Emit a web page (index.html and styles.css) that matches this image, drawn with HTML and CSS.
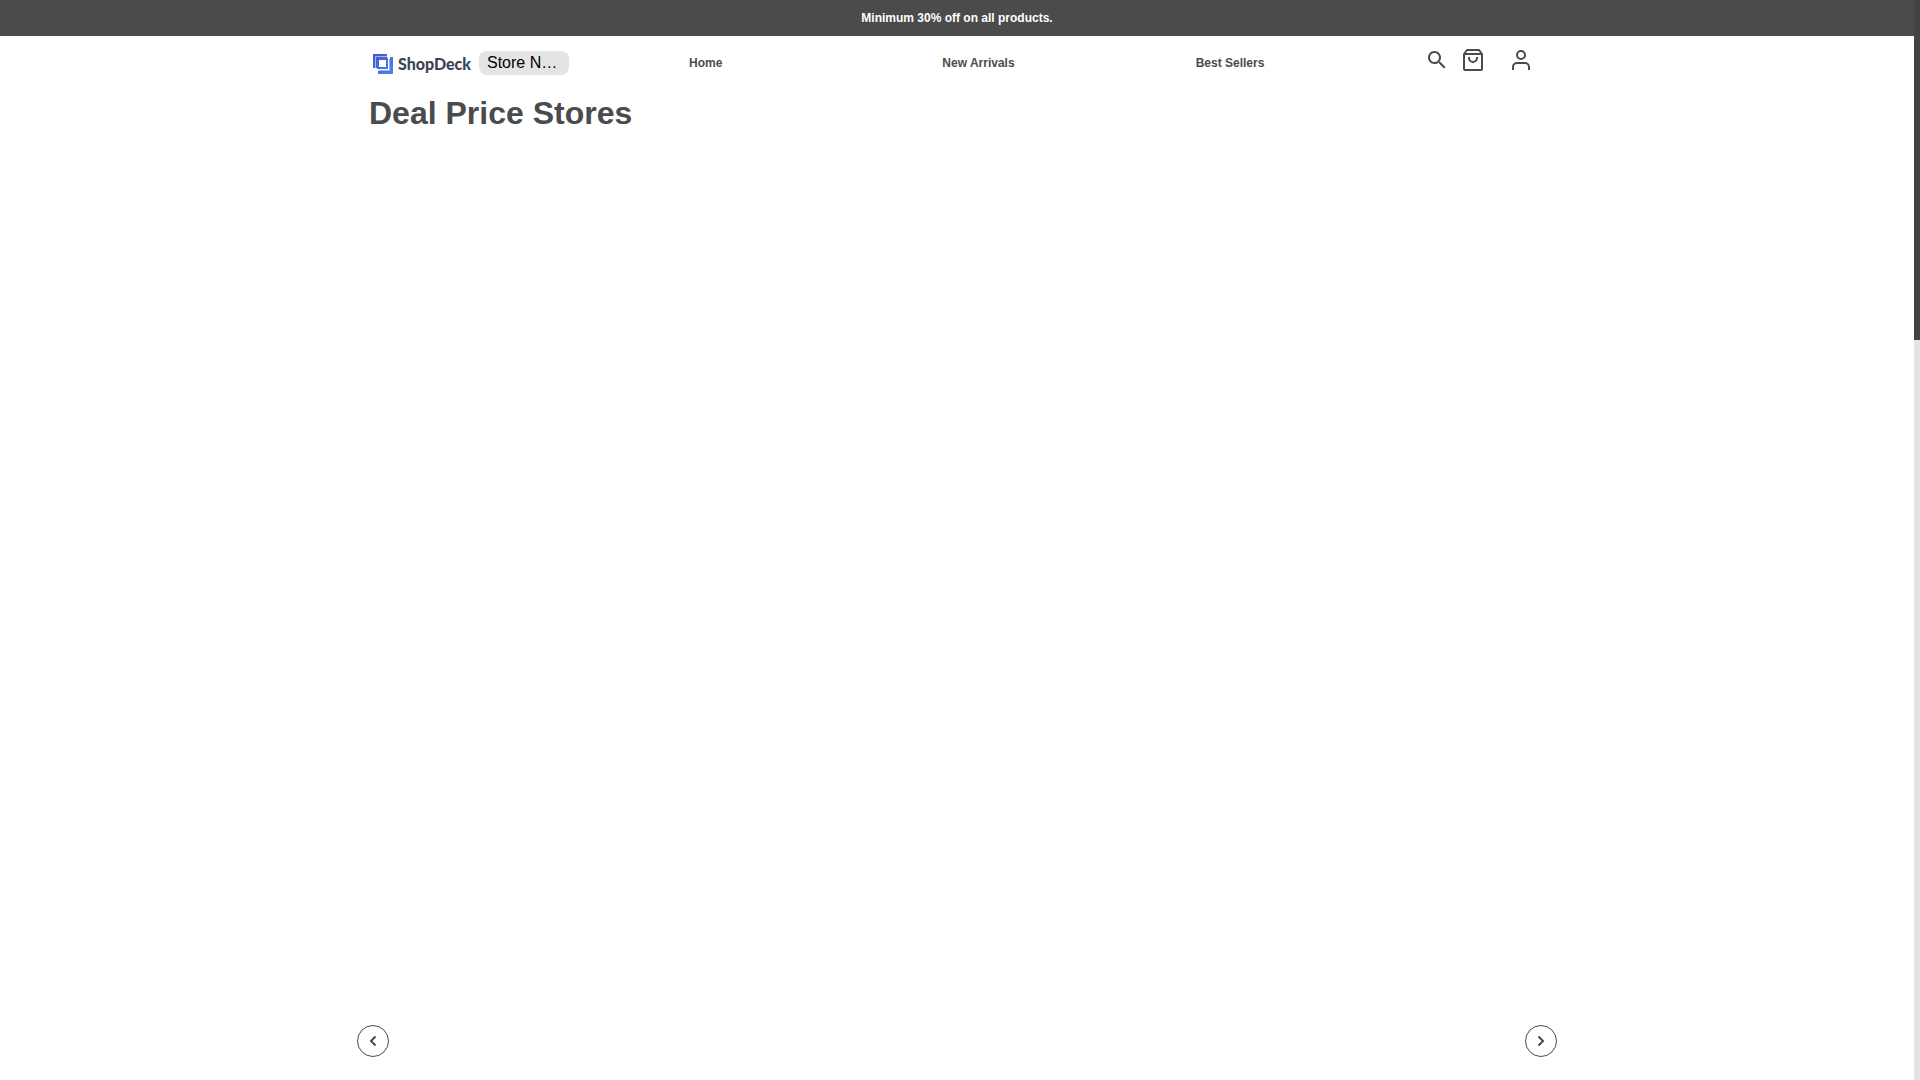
FILE: index.html
```html
<!DOCTYPE html>
<html lang="en">
<head>
	<meta charset="utf-8">
	<title>Deal Price Stores</title>
	<link rel="stylesheet" href="styles.css">
</head>
<body>
	<div class="page">
		<div class="offer-bar">Minimum 30% off on all products.</div>

		<header class="header container">
			<a class="logo" href="#" aria-label="ShopDeck">
				<svg width="20" height="20" viewBox="0 0 20 20">
					<defs>
						<linearGradient id="logo-blue" gradientUnits="userSpaceOnUse" x1="0" y1="0" x2="20" y2="20">
							<stop offset="0" stop-color="#4156c6"/>
							<stop offset="1" stop-color="#4b86f2"/>
						</linearGradient>
					</defs>
					<path fill="url(#logo-blue)" d="M0 0h14v5H5v9H0z"/>
					<path fill="none" stroke="#a9b6ea" stroke-width="1" d="M14 2.5H2.5V14"/>
					<path fill="#fff" stroke="url(#logo-blue)" stroke-width="2" d="M5 5h9v9H5z"/>
					<path fill="url(#logo-blue)" d="M17 3h3v17H5v-3h12z"/>
					<path fill="none" stroke="#8fb0f4" stroke-width="1" d="M16.5 5v11.500H6"/>
				</svg>
				<span>ShopDeck</span>
			</a>
			<span class="store-name">Store N…</span>

			<nav class="nav">
				<a href="#">Home</a>
				<a href="#">New Arrivals</a>
				<a href="#">Best Sellers</a>
			</nav>

			<div class="actions">
				<button type="button" aria-label="Search">
					<svg width="24" height="24" viewBox="0 0 24 24" fill="currentColor">
						<path d="M15.5 14h-.79l-.28-.27C15.41 12.59 16 11.11 16 9.5 16 5.91 13.09 3 9.5 3S3 5.91 3 9.5 5.91 16 9.500 16c1.61 0 3.09-.59 4.23-1.57l.27.28v.79l5 4.99L20.49 19l-4.99-5zm-6 0C7.01 14 5 11.99 5 9.5S7.01 5 9.5 5 14 7.01 14 9.5 11.99 14 9.5 14z"/>
					</svg>
				</button>
				<button type="button" aria-label="Bag">
					<svg width="24" height="24" viewBox="0 0 24 24" fill="none" stroke="currentColor" stroke-width="2" stroke-linejoin="round">
						<path d="M3 6v15a1 1 0 0 0 1 1h16a1 1 0 0 0 1-1V6l-3-4H6zM3 6h18M16 9v1a4 4 0 0 1-8 0V9"/>
					</svg>
				</button>
				<button type="button" class="account" aria-label="Account">
					<svg width="24" height="24" viewBox="0 0 24 24" fill="none" stroke="currentColor" stroke-width="2">
						<path d="M20 22v-3a4 4 0 0 0-4-4H8a4 4 0 0 0-4 4v3"/>
						<circle cx="12" cy="7" r="4"/>
					</svg>
				</button>
			</div>
		</header>

		<main class="container">
			<h1>Deal Price Stores</h1>
			<div class="slider">
				<button type="button" aria-label="Previous">
					<svg width="16" height="16" viewBox="0 0 16 16"><path d="M10.500 3.500L6 8l4.500 4.500"/></svg>
				</button>
				<button type="button" aria-label="Next">
					<svg width="16" height="16" viewBox="0 0 16 16"><path d="M5.500 3.500L10 8l-4.500 4.500"/></svg>
				</button>
			</div>
		</main>
	</div>

	<div class="scroll-track"><div class="scroll-thumb"></div></div>
</body>
</html>
```
FILE: styles.css
```css
* {
	box-sizing: border-box;
}
body {
	margin: 0;
	display: flex;
	height: 100vh;
	overflow: hidden;
	background-color: #fff;
	color: #4b4b4b;
	font-family: "Liberation Sans", Arial, sans-serif;
}
a {
	color: inherit;
	text-decoration: none;
}
button {
	display: flex;
	align-items: center;
	justify-content: center;
	padding: 0;
	border: none;
	background: none;
	color: inherit;
	cursor: pointer;
}
.page {
	flex: 1;
	display: flex;
	flex-direction: column;
}
.container {
	width: 100%;
	max-width: 1200px;
	margin: 0 auto;
}

/* Top bar */
.offer-bar {
	padding: 10px;
	background-color: #4b4b4b;
	color: #fff;
	font-size: 12px;
	font-weight: bold;
	line-height: 16px;
	text-align: center;
}

/* Header */
.header {
	display: flex;
	align-items: center;
	height: 54px;
	padding: 0 24px 0 16px;
}
.logo {
	display: flex;
	align-items: center;
	gap: 5px;
	width: 106px;
	padding-top: 2px;
	color: #3c4354;
	font-family: Lato, sans-serif;
	font-size: 16px;
	font-weight: 900;
	line-height: 20px;
}
.logo svg {
	flex: none;
}
.store-name {
	width: 90px;
	padding: 0 8px;
	border-radius: 8px;
	background-color: #e4e4e4;
	color: #000;
	font-size: 16px;
	line-height: 24px;
	white-space: nowrap;
}
.nav {
	flex: 1;
	display: grid;
	grid-template-columns: repeat(3, 1fr);
	margin: 0 -24px 0 120px;
	font-size: 12px;
	font-weight: bold;
	line-height: 16px;
}
.actions {
	display: flex;
	gap: 12px;
	padding-bottom: 6px;
}
.account {
	margin-left: 12px;
}

/* Content */
main {
	flex: 1;
	display: flex;
	flex-direction: column;
}
h1 {
	margin: 0;
	padding: 4px 12px;
	font-size: 32px;
	line-height: 38px;
}
.slider {
	display: flex;
	justify-content: space-between;
	margin-top: auto;
	padding-bottom: 23px;
}
.slider button {
	width: 32px;
	height: 32px;
	border: 1px solid #4b4b4b;
	border-radius: 50%;
}
.slider path {
	fill: none;
	stroke: #4b4b4b;
	stroke-width: 2;
}

/* Scrollbar */
.scroll-track {
	width: 6px;
	background-color: #e4e4e4;
}
.scroll-thumb {
	height: 340px;
	background-color: #434343;
}
```
